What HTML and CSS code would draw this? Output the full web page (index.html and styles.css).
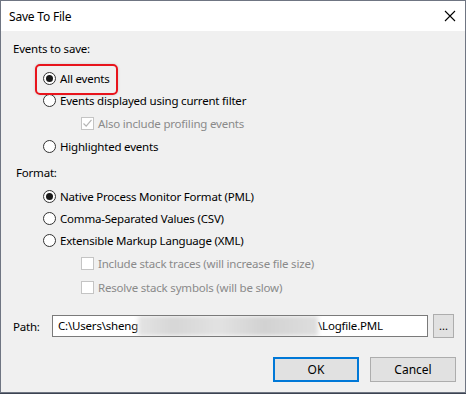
FILE: index.html
```html
<!DOCTYPE html>
<html lang="en">
<head>
    <meta charset="UTF-8">
    <title>Save To File</title>
    <link rel="stylesheet" href="styles.css">
</head>
<body>
    <div class="dialog">
        <div class="titlebar">
            <span class="title">Save To File</span>
            <svg class="close" width="12" height="12" viewBox="0 0 12 12">
                <path d="M1 1 L11 11 M11 1 L1 11" stroke="#000" stroke-width="1.1" fill="none"/>
            </svg>
        </div>

        <div class="content">
            <div class="group-label">Events to save:</div>
            <div class="row radio-row marked"><span class="radio checked"></span>All events</div>
            <div class="row radio-row"><span class="radio"></span>Events displayed using current filter</div>
            <div class="row check-row disabled">
                <span class="check">
                    <svg width="11" height="11" viewBox="0 0 11 11"><path d="M1.5 5.5 L4.2 8.2 L9.5 1.8" stroke="#b5b5b5" stroke-width="1.2" fill="none"/></svg>
                </span>Also include profiling events
            </div>
            <div class="row radio-row"><span class="radio"></span>Highlighted events</div>

            <div class="group-label format">Format:</div>
            <div class="row radio-row"><span class="radio checked"></span>Native Process Monitor Format (PML)</div>
            <div class="row radio-row"><span class="radio"></span>Comma-Separated Values (CSV)</div>
            <div class="row radio-row"><span class="radio"></span>Extensible Markup Language (XML)</div>
            <div class="row check-row disabled"><span class="check"></span>Include stack traces (will increase file size)</div>
            <div class="row check-row disabled"><span class="check"></span>Resolve stack symbols (will be slow)</div>

            <div class="path-row">
                <span class="path-label">Path:</span>
                <div class="path-input">C:\Users\sheng<span class="blurred"></span>\Logfile.PML</div>
                <button class="browse">...</button>
            </div>

            <div class="buttons">
                <button class="btn default">OK</button>
                <button class="btn">Cancel</button>
            </div>
        </div>
    </div>
</body>
</html>
```

FILE: styles.css
```css
* {
    margin: 0;
    padding: 0;
    box-sizing: border-box;
}
body {
    font-family: "Segoe UI", "Noto Sans", sans-serif;
    font-size: 11.5px;
    letter-spacing: -0.2px;
    color: #000;
    background-color: #3c4352;
    width: 466px;
    height: 394px;
    overflow: hidden;
}
.dialog {
    width: 466px;
    height: 393px;
    border: 1px solid #6f7582;
    background-color: #f0f0f0;
}
.titlebar {
    height: 30px;
    background-color: #fff;
    display: flex;
    align-items: center;
    justify-content: space-between;
    padding: 0 9px 0 8px;
}
.title {
    font-size: 12px;
}
.content {
    padding: 10px 0 0 0;
}
.group-label {
    height: 16px;
    line-height: 16px;
    padding-left: 12px;
}
.group-label.format {
    margin-top: 8px;
    padding-left: 15px;
}
.row {
    display: flex;
    align-items: center;
    height: 22px;
    white-space: nowrap;
}
.radio-row {
    padding-left: 42px;
}
.group-label + .radio-row {
    margin-top: 10px;
}
.group-label.format + .radio-row {
    margin-top: 4px;
}
.check-row {
    height: 24px;
    padding-left: 80px;
}
.disabled {
    color: #8a8a8a;
}
.radio {
    width: 13px;
    height: 13px;
    border: 1px solid #333;
    border-radius: 50%;
    background-color: #fff;
    margin-right: 4px;
    display: flex;
    align-items: center;
    justify-content: center;
}
.radio.checked::after {
    content: "";
    width: 7px;
    height: 7px;
    border-radius: 50%;
    background-color: #1a1a1a;
}
.check {
    width: 13px;
    height: 13px;
    border: 1px solid #c4c4c4;
    background-color: #fff;
    margin-right: 4px;
    display: flex;
    align-items: center;
    justify-content: center;
}
.marked {
    position: relative;
}
.marked::before {
    content: "";
    position: absolute;
    left: 34px;
    top: -3px;
    width: 79px;
    height: 27px;
    border: 2px solid #e8141c;
    border-radius: 5px;
    box-shadow: 0 0 3px rgba(0, 0, 0, 0.15);
}
.path-row {
    display: flex;
    align-items: center;
    margin-top: 15px;
    height: 24px;
}
.path-label {
    width: 51px;
    padding-left: 12px;
}
.path-input {
    width: 376px;
    height: 22px;
    line-height: 20px;
    border: 1px solid #7a7a7a;
    background-color: #fff;
    padding-left: 5px;
    white-space: nowrap;
    overflow: hidden;
    display: flex;
    align-items: center;
}
.blurred {
    display: inline-block;
    width: 180px;
    height: 20px;
    background: linear-gradient(90deg, #e4e4e4, #d6d6d6 20%, #e2e2e2 45%, #d2d2d2 70%, #dedede);
    filter: blur(2px);
}
.browse {
    width: 21px;
    height: 24px;
    margin-left: 5px;
    border: 1px solid #adadad;
    background-color: #e1e1e1;
    font-family: inherit;
    font-size: 11px;
    line-height: 18px;
}
.buttons {
    display: flex;
    justify-content: flex-end;
    gap: 11px;
    margin-top: 19px;
    padding-right: 9px;
}
.btn {
    width: 86px;
    height: 25px;
    border: 1px solid #adadad;
    background-color: #e1e1e1;
    font-family: inherit;
    font-size: 12px;
}
.btn.default {
    border: 2px solid #0078d7;
}
```
